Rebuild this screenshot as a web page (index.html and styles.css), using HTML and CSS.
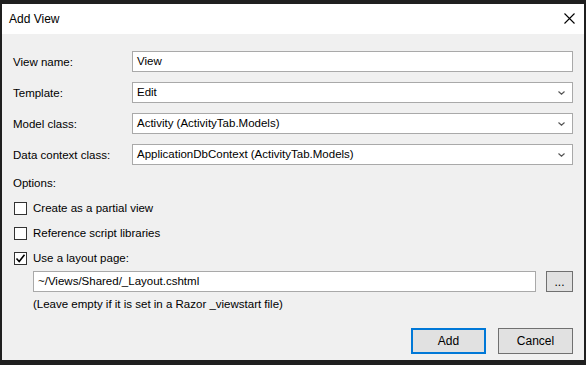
FILE: index.html
```html
<!DOCTYPE html>
<html>
<head>
<link rel="stylesheet" href="styles.css">
</head>
<body>

<div class="dialog">
  <!-- 标题栏 -->
  <div class="titlebar">
    <span class="title">Add View</span>
    <svg class="close" width="11" height="11" viewBox="0 0 11 11">
      <path d="M0.5 0.5 L10.5 10.5 M10.5 0.5 L0.5 10.5" stroke="#000" stroke-width="1.1" fill="none"/>
    </svg>
  </div>

  <div class="content">
    <div class="form-grid">
      <label>View name:</label>
      <div class="field">View</div>

      <label>Template:</label>
      <div class="field select">
        <span>Edit</span>
        <svg width="7" height="4" viewBox="0 0 7 4"><path d="M0.5 0.5 L3.5 3.2 L6.5 0.5" stroke="#555" stroke-width="1.2" fill="none"/></svg>
      </div>

      <label>Model class:</label>
      <div class="field select">
        <span>Activity (ActivityTab.Models)</span>
        <svg width="7" height="4" viewBox="0 0 7 4"><path d="M0.5 0.5 L3.5 3.2 L6.5 0.5" stroke="#555" stroke-width="1.2" fill="none"/></svg>
      </div>

      <label>Data context class:</label>
      <div class="field select">
        <span>ApplicationDbContext (ActivityTab.Models)</span>
        <svg width="7" height="4" viewBox="0 0 7 4"><path d="M0.5 0.5 L3.5 3.2 L6.5 0.5" stroke="#555" stroke-width="1.2" fill="none"/></svg>
      </div>
    </div>

    <div class="options-label">Options:</div>

    <div class="check-row">
      <span class="box"></span>
      <span>Create as a partial view</span>
    </div>
    <div class="check-row">
      <span class="box"></span>
      <span>Reference script libraries</span>
    </div>
    <div class="check-row">
      <span class="box">
        <svg width="11" height="11" viewBox="0 0 11 11"><path d="M1.5 5.5 L4.2 8.5 L9.5 1.8" stroke="#000" stroke-width="1.6" fill="none"/></svg>
      </span>
      <span>Use a layout page:</span>
    </div>

    <div class="layout-row">
      <div class="field layout-path">~/Views/Shared/_Layout.cshtml</div>
      <button class="btn browse">...</button>
    </div>
    <div class="hint">(Leave empty if it is set in a Razor _viewstart file)</div>

    <div class="footer">
      <button class="btn primary">Add</button>
      <button class="btn">Cancel</button>
    </div>
  </div>
</div>

</body>
</html>
```

FILE: styles.css
```css
/* 窗口 */
body {
  margin: 0;
  padding: 4px 2px 5px 2px;
  background: #1f1f1f;
  font-family: "Liberation Sans", Arial, sans-serif;
  font-size: 11.5px;
  color: #000;
}
.dialog {
  width: 582px;
  height: 356px;
  background: #f0f0f0;
  display: flex;
  flex-direction: column;
}
.titlebar {
  height: 30px;
  background: #fff;
  display: flex;
  align-items: center;
  justify-content: space-between;
  padding: 0 9px 0 7px;
}
.title {
  font-size: 12px;
  margin-top: -1px;
}
.close {
  display: block;
  margin-top: -1px;
}

/* 表单 */
.content {
  flex: 1;
  display: flex;
  flex-direction: column;
  padding: 17px 11px 6px 11px;
}
.form-grid {
  display: grid;
  grid-template-columns: 119px 1fr;
  row-gap: 10px;
  align-items: center;
}
.field {
  height: 21px;
  box-sizing: border-box;
  background: #fff;
  border: 1px solid #a9a9a9;
  padding: 0 4px;
  display: flex;
  align-items: center;
  line-height: 19px;
}
.select {
  justify-content: space-between;
  padding-right: 7px;
}
.select svg {
  display: block;
}
.options-label {
  margin-top: 10px;
  line-height: 16px;
}
.check-row {
  display: flex;
  align-items: center;
  gap: 6px;
  height: 16px;
  margin-top: 9px;
  padding-left: 1px;
}
.box {
  width: 13px;
  height: 13px;
  box-sizing: border-box;
  border: 1px solid #333;
  background: #fff;
  display: flex;
  align-items: center;
  justify-content: center;
}
.box svg {
  display: block;
}
.layout-row {
  display: flex;
  gap: 10px;
  margin-top: 5px;
  padding-left: 20px;
}
.layout-path {
  flex: 1;
}
.hint {
  padding-left: 20px;
  margin-top: 4px;
  line-height: 16px;
}

/* 按钮 */
.btn {
  font-family: inherit;
  font-size: 12px;
  color: #000;
  background: #e1e1e1;
  border: 1px solid #adadad;
  padding: 0;
}
.browse {
  width: 27px;
  height: 21px;
  border-color: #707070;
  line-height: 14px;
}
.footer {
  margin-top: auto;
  display: flex;
  justify-content: flex-end;
  gap: 12px;
}
.footer .btn {
  width: 75px;
  height: 26px;
  border-color: #707070;
}
.footer .primary {
  border: 2px solid #0078d7;
}
```
